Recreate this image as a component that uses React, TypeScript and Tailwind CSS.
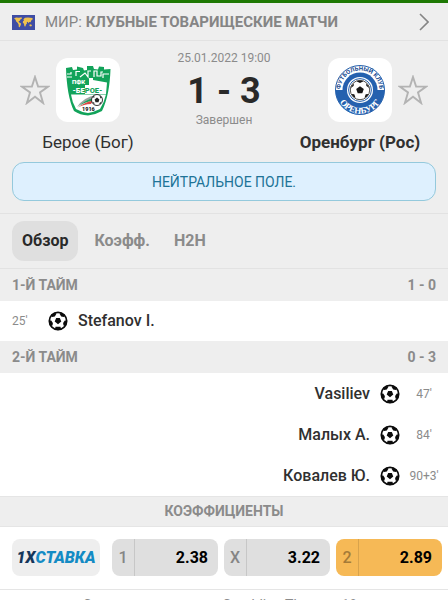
import { ReactNode } from "react";

type Goal = { player: string; minute: string };

const firstHalf: Goal[] = [{ player: "Stefanov I.", minute: "25'" }];

const secondHalf: Goal[] = [
  { player: "Vasiliev", minute: "47'" },
  { player: "Малых А.", minute: "84'" },
  { player: "Ковалев Ю.", minute: "90+3'" },
];

const odds = [
  { label: "1", value: "2.38", best: false },
  { label: "X", value: "3.22", best: false },
  { label: "2", value: "2.89", best: true },
];

function WorldFlag() {
  return (
    <svg viewBox="0 0 23 15" className="h-[15px] w-[23px] shrink-0" aria-hidden="true">
      <rect width="23" height="15" fill="#3f4da5" />
      <g fill="#efc14d">
        <path d="M2 3.5 4 2.6 7 2.8 9.5 2.2 10 3.4 8.4 4.6 7.6 6 6.4 6.6 7.4 7.6 9 8.4 8.8 10 7.6 12.2 6.8 12 6.6 9.4 5.6 7.8 4.2 6.4 3.6 4.8Z" />
        <path d="M11.4 4.2 13 2.8 16 2.4 20.4 3 20.8 4.2 19.4 5.2 18.6 7.2 17.2 7 16.6 8.2 15.6 6.8 14.8 7.2 15 8.4 14 9.6 13.4 11.4 12.4 11.2 12 8.8 10.8 7.8 11 6.2 12 5.6Z" />
        <path d="M17.4 9.8 19 9.2 20 10.4 19 11.4 17.6 11Z" />
      </g>
    </svg>
  );
}

function StarIcon() {
  return (
    <svg viewBox="0 0 30 30" className="size-[30px]" fill="none" stroke="#b3b3b3" strokeWidth="1.9" aria-hidden="true">
      <path d="M15 2 18.1 11.6H28.2L20 17.5 23.1 28 15 21.8 6.9 28 10 17.5 1.8 11.6H11.9Z" />
    </svg>
  );
}

function BallIcon() {
  return (
    <svg viewBox="0 0 20 20" className="size-5 shrink-0" aria-hidden="true">
      <circle cx="10" cy="10" r="8.7" fill="#fff" stroke="#0b0b0b" strokeWidth="1.7" />
      <g fill="#0b0b0b">
        <path d="M8.2 7.1H11.8L13.3 10.5 10 13.3 6.7 10.5Z" />
        <path d="M3.2 3.8 7.2 1.4 8.3 3 6.8 5.4 4.1 5.9Z" />
        <path d="M16.8 3.8 12.8 1.4 11.7 3 13.2 5.4 15.9 5.9Z" />
        <path d="M1.1 9.4 3.2 9.6 4.9 12 4.5 14.6 2.3 14.8Z" />
        <path d="M18.9 9.4 16.8 9.6 15.1 12 15.5 14.6 17.7 14.8Z" />
        <path d="M7.5 15.7H12.5L13 18.2 10 19.2 7 18.2Z" />
      </g>
    </svg>
  );
}

function BeroeLogo() {
  return (
    <svg viewBox="0 0 64 64" className="size-16" role="img" aria-label="Берое">
      <path d="M10 10 16 9 17 12 21 11.5 21 8.5 27 10 28 12.5 31 12 31 8 37 8 38 11 42 11.5 43 8.5 48 9 48 11.5 54.5 11 C54 27 51.5 42 46 53 Q39 57 32 57.5 Q24 57 18 53 C13 43 10.5 27 10 10Z" fill="#12a35a" />
      <path d="M33 20 37 20 37 22 51 24.5 50 36 29 36 29 27 33 27Z" fill="#fff" />
      <path d="M15 36.5H50Q48 45 44 51 38 54 32 55 25 54 20 51 16 44 15 36.5Z" fill="#fff" />
      <path d="M11 16H15V14M11 19H16M20 18V13.5H24M24 19 29 15 32 19V13H35M38 19V13H41V18H45V14H47M47 20V16H53" fill="none" stroke="#fff" strokeWidth="1.2" />
      <path d="M21 49Q28 39 40 37L36 42Q27 44 21 49Z" fill="#9aa5a0" />
      <path d="M22 49Q29 42 38 40L36 43Q28 44 22 49Z" fill="#12a35a" />
      <path d="M22 49.5Q29 44 37 42.5L35 46Q28 46 22 49.5Z" fill="#d84b45" />
      <circle cx="41" cy="42" r="5.5" fill="#fff" stroke="#222" strokeWidth=".9" />
      <path d="M41 39.6 43.4 41.4 42.5 44.2H39.5L38.6 41.4ZM36 39.5 38 37.5 38.6 39.5ZM43.5 37.5 46 39.5 44.5 40.5ZM36.2 44 38.2 44.4 38.5 46.7ZM45.6 43.5 44.6 46 43 45.5Z" fill="#222" />
      <g fontFamily="Roboto, sans-serif" fontWeight="900">
        <text x="16" y="26" fontSize="6" fill="#fff">ПФК</text>
        <text x="16.5" y="35" fontSize="7.5" fill="#fff">
          -БЕ<tspan fill="#12a35a">РОЕ-</tspan>
        </text>
        <text x="26" y="53" fontSize="5.5" fill="#222">1916</text>
      </g>
    </svg>
  );
}

function OrenburgLogo() {
  return (
    <svg viewBox="0 0 64 64" className="size-16" role="img" aria-label="Оренбург">
      <defs>
        <path id="ring-top" d="M12.6 34A19.5 19.5 0 1 1 51.4 34" />
        <path id="ring-bottom" d="M8.6 29A23.6 23.6 0 1 0 55.4 29" />
      </defs>
      <circle cx="32" cy="32" r="24.5" fill="#fff" stroke="#2761ac" strokeWidth="1" />
      <path d="M7.5 32H56.5A24.5 24.5 0 0 1 7.5 32Z" fill="#2461af" />
      <circle cx="32" cy="32" r="17.5" fill="#2461af" />
      <circle cx="32" cy="32" r="13" fill="#fff" />
      <circle cx="32" cy="32" r="11.4" fill="#fff" stroke="#2461af" strokeWidth="1" />
      <circle cx="32" cy="32" r="9.7" fill="#fff" stroke="#222" strokeWidth=".8" />
      <g fill="#171717">
        <path d="M32 28.2 35.8 31 34.3 35.3H29.7L28.2 31Z" />
        <path d="M28.5 23.3 32 25 35.5 23.3 32 22.4ZM22.6 30 25.6 28 26 25.5 23.8 27.8ZM41.4 30 38.4 28 38 25.5 40.2 27.8ZM23.5 36 26.3 36.3 27.5 39.8 25 38.5ZM40.5 36 37.7 36.3 36.5 39.8 39 38.5Z" />
      </g>
      <g fontWeight="700">
        <text fontFamily="Roboto, sans-serif" fontSize="6" fill="#174b91" textAnchor="middle">
          <textPath href="#ring-top" startOffset="50%">ФУТБОЛЬНЫЙ КЛУБ</textPath>
        </text>
        <text fontFamily="Liberation Serif, serif" fontSize="9" fill="#fff" textAnchor="middle">
          <textPath href="#ring-bottom" startOffset="50%">ОРЕНБУРГ</textPath>
        </text>
      </g>
    </svg>
  );
}

function Team({ name, bold, children }: { name: string; bold?: boolean; children: ReactNode }) {
  return (
    <div className="flex w-[136px] flex-col gap-2">
      {children}
      <h2 className={`text-center text-[17px] leading-6 whitespace-nowrap ${bold ? "font-bold" : ""}`}>{name}</h2>
    </div>
  );
}

function HalfHeader({ title, score }: { title: string; score: string }) {
  return (
    <div className="flex h-8 items-center justify-between bg-[#eee] px-3 text-sm font-bold text-[#8b8b8b]">
      <h3>{title}</h3>
      <span>{score}</span>
    </div>
  );
}

export default function App() {
  return (
    <main className="min-h-screen border-t-[3px] border-[#1e7904] bg-white font-[Roboto,'Noto_Sans',sans-serif] text-[#303030]">
      <header className="bg-[#eee]">
        <a href="#league" className="flex h-[38px] items-center gap-2.5 border-b border-[#e2e2e2] pt-px pr-[19px] pl-3 text-[#858585]">
          <WorldFlag />
          <span className="flex-1 text-[15px] leading-5 whitespace-nowrap">
            МИР: <b>КЛУБНЫЕ ТОВАРИЩЕСКИЕ МАТЧИ</b>
          </span>
          <svg viewBox="0 0 10 18" className="h-[18px] w-2.5" fill="none" stroke="currentColor" strokeWidth="1.6" aria-hidden="true">
            <path d="m1 1 8 8-8 8" />
          </svg>
        </a>

        <section className="flex items-start justify-between px-5 pt-[9px]">
          <Team name="Берое (Бог)">
            <div className="flex items-center pt-2">
              <button aria-label="Добавить Берое в избранное" className="mr-1.5">
                <StarIcon />
              </button>
              <div className="rounded-xl bg-white">
                <BeroeLogo />
              </div>
            </div>
          </Team>
          <div className="text-center text-[#8b8b8b]">
            <time className="block text-xs leading-4">25.01.2022 19:00</time>
            <p className="mt-1 text-4xl leading-[42px] font-bold text-[#292929]">1 - 3</p>
            <p className="text-xs leading-4">Завершен</p>
          </div>
          <Team name="Оренбург (Рос)" bold>
            <div className="flex items-center justify-end pt-2">
              <div className="rounded-xl bg-white">
                <OrenburgLogo />
              </div>
              <button aria-label="Добавить Оренбург в избранное" className="ml-1.5">
                <StarIcon />
              </button>
            </div>
          </Team>
        </section>

        <div className="mx-3 mt-2 flex h-[39px] items-center justify-center rounded-xl border border-[#94c9dc] bg-[#def0fe] text-sm text-[#207397]">
          НЕЙТРАЛЬНОЕ ПОЛЕ.
        </div>

        <nav className="mt-3 flex h-14 items-center border-y border-[#e2e2e2] px-3 text-base font-bold text-[#8b8b8b]">
          <button className="h-10 rounded-xl bg-[#dfdfdf] px-2.5 text-[#292929]">Обзор</button>
          <button className="ml-4">Коэфф.</button>
          <button className="ml-6">H2H</button>
        </nav>
      </header>

      <section>
        <HalfHeader title="1-Й ТАЙМ" score="1 - 0" />
        <ul>
          {firstHalf.map((goal) => (
            <li key={goal.minute} className="flex h-10 items-center px-3">
              <span className="w-9 text-xs text-[#8b8b8b]">{goal.minute}</span>
              <BallIcon />
              <span className="ml-2.5 text-base font-medium">{goal.player}</span>
            </li>
          ))}
        </ul>
        <HalfHeader title="2-Й ТАЙМ" score="0 - 3" />
        <ul>
          {secondHalf.map((goal) => (
            <li key={goal.minute} className="flex h-[41px] items-center justify-end pr-1">
              <span className="mr-2.5 text-base font-medium">{goal.player}</span>
              <BallIcon />
              <span className="ml-1 w-10 text-center text-xs text-[#8b8b8b]">{goal.minute}</span>
            </li>
          ))}
        </ul>
      </section>

      <section>
        <h3 className="h-[31px] border-y border-[#e5e5e5] bg-[#eee] text-center text-sm leading-[29px] font-bold text-[#8b8b8b]">
          КОЭФФИЦИЕНТЫ
        </h3>
        <div className="flex gap-1.5 pt-3 pr-1.5 pb-[13px] pl-3">
          <a href="#bookmaker" className="mr-1.5 flex h-[37px] w-[88px] shrink-0 items-center justify-center rounded-lg bg-[#eee] text-base font-black text-[#148bc4] italic">
            <span className="text-[#14365b]">1X</span>СТАВКА
          </a>
          {odds.map((odd) => (
            <button
              key={odd.label}
              className={`flex h-[37px] flex-1 items-center rounded-lg text-base font-bold text-black ${odd.best ? "bg-[#f6b956]" : "bg-[#dfdfdf]"}`}
            >
              <span className={`flex h-full w-[23px] items-center justify-center border-r font-medium ${odd.best ? "border-[#d8a34c] text-[#a57b38]" : "border-[#c7c7c7] text-[#858585]"}`}>
                {odd.label}
              </span>
              <span className="flex-1 pr-2.5 text-right">{odd.value}</span>
            </button>
          ))}
        </div>
        <p className="border-t border-[#e5e5e5] pt-[7px] text-center text-sm leading-4 text-[#8b8b8b]">
          Ставь ответственно. Gambling Therapy. 18+
        </p>
      </section>
    </main>
  );
}
